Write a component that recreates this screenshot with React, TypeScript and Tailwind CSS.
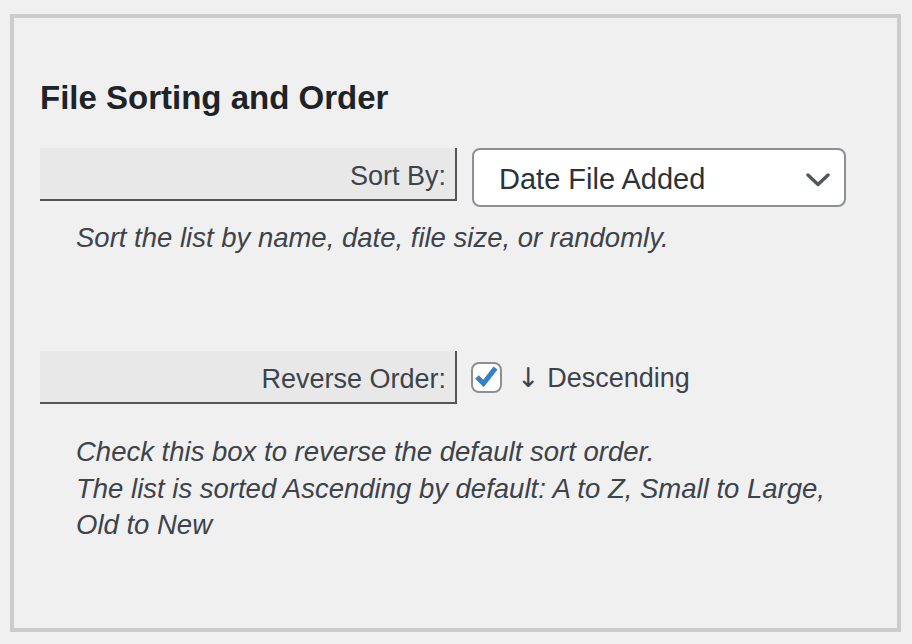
import React from 'react'

const font = { fontFamily: '"Liberation Sans", Arial, sans-serif' }

function FieldLabel({ children }: { children: React.ReactNode }) {
  return (
    <div className="flex h-[53px] w-[417px] shrink-0 items-center justify-end border-r-2 border-b-2 border-[#555555] bg-[#e8e8e8] pt-[5px] pr-[9px] text-[27px] leading-none text-[#3c434a]">
      {children}
    </div>
  )
}

function Chevron() {
  return (
    <svg width="24" height="14" viewBox="0 0 24 14" fill="none">
      <polyline
        points="2,2 12,11.5 22,2"
        stroke="#50575e"
        strokeWidth="3.4"
        strokeLinecap="round"
        strokeLinejoin="round"
      />
    </svg>
  )
}

function CheckBox() {
  return (
    <div className="flex h-[31px] w-[31px] shrink-0 items-center justify-center rounded-[8px] border-2 border-[#8c8f94] bg-white">
      <svg width="27" height="27" viewBox="0 0 27 27" fill="none">
        <path d="M4 13 L10.5 19.5 L22.5 4" stroke="#3582c4" strokeWidth="5" strokeLinejoin="miter" />
      </svg>
    </div>
  )
}

export default function App() {
  return (
    <div className="h-[644px] w-[912px] bg-[#f0f0f0] pt-[14px] pl-[10px]" style={font}>
      <div className="h-[618px] w-[891px] border-4 border-[#cccccc] bg-[#f0f0f0] pl-[26px]">
        {/* Section heading */}
        <h2 className="mt-[60px] mb-[-2px] text-[33px] leading-[40px] font-bold text-[#1d2327]">
          File Sorting and Order
        </h2>

        {/* Sort By */}
        <div className="mt-[32px] flex items-start">
          <FieldLabel>Sort By:</FieldLabel>
          <div className="ml-[15px] flex h-[59px] w-[374px] items-center justify-between rounded-[8px] border-2 border-[#8c8f94] bg-white pt-[4px] pr-[14px] pl-[25px]">
            <span className="text-[29px] leading-none text-[#2c3338]">Date File Added</span>
            <Chevron />
          </div>
        </div>
        <p className="mt-[13px] pl-[36px] text-[27.5px] leading-[36px] text-[#3c434a] italic">
          Sort the list by name, date, file size, or randomly.
        </p>

        {/* Reverse Order */}
        <div className="mt-[95px] flex items-center">
          <FieldLabel>Reverse Order:</FieldLabel>
          <div className="ml-[14px] flex items-center">
            <CheckBox />
            <span className="ml-[15px] text-[27px] leading-none text-[#3c434a]">
              <span style={{ fontFamily: '"DejaVu Sans", sans-serif' }}>↓</span> Descending
            </span>
          </div>
        </div>
        <p className="mt-[30px] pl-[36px] text-[27.5px] leading-[36.6px] whitespace-nowrap text-[#3c434a] italic">
          Check this box to reverse the default sort order.
          <br />
          The list is sorted Ascending by default: A to Z, Small to Large,
          <br />
          Old to New
        </p>
      </div>
    </div>
  )
}
